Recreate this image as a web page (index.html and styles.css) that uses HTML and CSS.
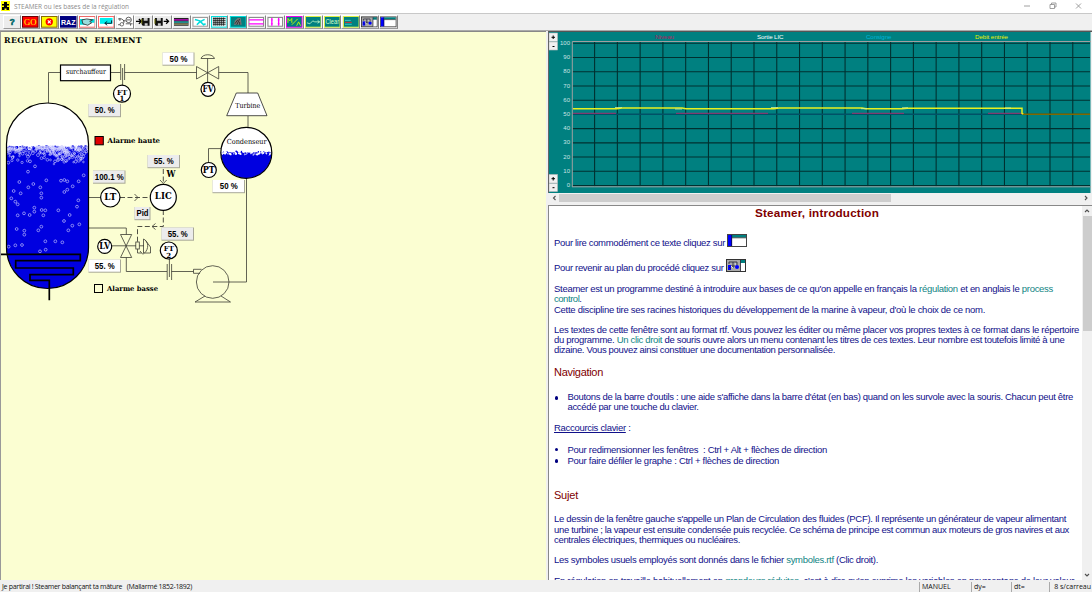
FILE: index.html
```html
<!DOCTYPE html>
<html lang="fr">
<head>
<meta charset="utf-8">
<title>STEAMER ou les bases de la régulation</title>
<link rel="stylesheet" href="styles.css">
</head>
<body>
<div class="window">
  <header class="titlebar">
    <svg class="app-icon" viewBox="0 0 9 10"><rect width="9" height="10" fill="#ff0"/><path d="M3 1H6V3H8V4.500H6V6H8V9H5.500V7.500H3.500V9H1V6H3V4.500H1V3H3Z" fill="#000"/></svg>
    <svg class="caption" viewBox="0 0 200 13"><text x="0" y="9.300" textLength="115" lengthAdjust="spacingAndGlyphs">STEAMER ou les bases de la régulation</text></svg>
    <svg class="controls" viewBox="0 0 70 13"><path d="M0 6H6M26 4.500H30.500V8.500H26ZM27.500 4.500V3H32V7H30.500M52 3.500L57 8.500M57 3.500L52 8.500" fill="none" stroke="#888" stroke-width=".8"/></svg>
  </header>

  <nav class="toolbar">
    <button class="tool"><svg viewBox="0 0 17 12"><text x="8.500" y="9.500" class="t-help">?</text></svg></button>
    <button class="tool"><svg viewBox="0 0 17 12"><rect x=".5" y=".5" width="16" height="11" fill="red" stroke="#600"/><text x="8.500" y="9" class="t-go">GO</text></svg></button>
    <button class="tool"><svg viewBox="0 0 17 12"><rect x=".5" y=".5" width="16" height="11" fill="#ff0" stroke="#860"/><circle cx="8.500" cy="6" r="3.800" fill="red"/><path d="M7 4.500L10 7.500M10 4.500L7 7.500" stroke="#fff" stroke-width="1.200"/></svg></button>
    <button class="tool"><svg viewBox="0 0 17 12"><rect width="17" height="12" fill="#000080"/><text x="8.500" y="9" class="t-raz" textLength="15" lengthAdjust="spacingAndGlyphs">RAZ</text></svg></button>
    <button class="tool"><svg viewBox="0 0 17 12"><rect x=".5" y=".5" width="16" height="11" fill="#fff" stroke="#e66"/><path d="M1 3H6V9H1ZM11 3H16V7H12Z" fill="#0dd"/><path d="M3 4L8 3L14 4L11 5.500L13 7L9 9.500L4 8Z" fill="#9dd" stroke="#222" stroke-width=".8"/></svg></button>
    <button class="tool"><svg viewBox="0 0 17 12"><rect x=".5" y=".5" width="16" height="11" fill="#fff" stroke="#f66"/><rect x="2" y="2" width="13" height="6" fill="#0ee"/><path d="M14 4.500V7.500H7M9.500 5.500L7 7.500L9.500 9.500" fill="none" stroke="#023"/></svg></button>
    <button class="tool"><svg viewBox="0 0 17 12"><rect width="17" height="12" fill="#fff"/><path d="M1 3H5L7 5H9M1 9H5L7 7V4M3 2V5M9 8H16M14 8V10" fill="none" stroke="#333" stroke-width=".8"/><circle cx="12" cy="4" r="2.800" fill="#fff" stroke="#333" stroke-width=".8"/><circle cx="5" cy="8.500" r="1.800" fill="#fff" stroke="#333" stroke-width=".7"/><path d="M10 4H14" stroke="#333" stroke-width=".8"/></svg></button>
    <button class="tool"><svg viewBox="0 0 17 12"><path d="M1 5.500H6M4 3L6.500 5.500L4 8" fill="none" stroke="#000" stroke-width="1.300"/><path d="M7 2H15V10H8L7 9Z" fill="#111"/><path d="M9 2H13V5H9ZM10 7.500H13V10H10Z" fill="#ccc"/><path d="M7 3V8" stroke="#770"/></svg></button>
    <button class="tool"><svg viewBox="0 0 17 12"><path d="M1 2H9V10H2L1 9Z" fill="#111"/><path d="M3 2H7V5H3ZM4 7.500H7V10H4Z" fill="#ccc"/><path d="M1 3V8" stroke="#770"/><path d="M10 5.500H15M12.500 3L15 5.500L12.500 8" fill="none" stroke="#000" stroke-width="1.300"/></svg></button>
    <button class="tool"><svg viewBox="0 0 17 12"><path d="M1 2H16V10H1Z" fill="#222"/><path d="M1 4H16" stroke="#d0d" stroke-width="1.200"/><path d="M1 6.200H16" stroke="#2cc" stroke-width="1.200"/><path d="M1 8.300H16" stroke="#cc8"/></svg></button>
    <button class="tool"><svg viewBox="0 0 17 12"><rect x="1" y="1.500" width="15" height="9" fill="#fff" stroke="#999"/><path d="M3 3.500L8 5L12 9L14 8M13 3.500L8 6L5 9" fill="none" stroke="#0dd" stroke-width="1.600"/></svg></button>
    <button class="tool"><svg viewBox="0 0 17 12"><rect x=".5" y=".5" width="16" height="11" fill="#dee" stroke="#0dd"/><path d="M2 2.500H15M2 4.500H15M2 6.500H15M2 8.500H15M3 1.500V10M5 1.500V10M7 1.500V10M9 1.500V10M11 1.500V10M13 1.500V10" stroke="#111" stroke-width=".8"/></svg></button>
    <button class="tool"><svg viewBox="0 0 17 12"><rect x=".5" y=".5" width="16" height="11" fill="#008080" stroke="#0dd"/><path d="M4 9L5 5L8 2H11L12 9Z" fill="#777"/><path d="M5 8L8 4M7 9L10 3M10 9V6" stroke="#222" stroke-width=".8"/></svg></button>
    <button class="tool"><svg viewBox="0 0 17 12"><rect x="1" y="1.500" width="15" height="9" fill="#fff" stroke="#888"/><path d="M1 4H16M1 8H16" stroke="#f0f" stroke-width="1.300"/></svg></button>
    <button class="tool"><svg viewBox="0 0 17 12"><rect x="1" y="1.500" width="15" height="9" fill="#fff" stroke="#888"/><path d="M5 2V10M12 2V10" stroke="#f0f" stroke-width="1.400"/><path d="M4 4H6M11 4H13M4 8H6M11 8H13" stroke="#f0f" stroke-width=".8"/></svg></button>
    <button class="tool"><svg viewBox="0 0 17 12"><rect x=".5" y=".5" width="16" height="11" fill="#008080" stroke="#e0e"/><path d="M2 7V2.500L4 5L6 2.500V7M11 10L13 6L15 10M6 9L12 3" fill="none" stroke="#cf0" stroke-width=".9"/></svg></button>
    <button class="tool"><svg viewBox="0 0 17 12"><rect x=".5" y=".5" width="16" height="11" fill="#008080" stroke="#de4"/><path d="M2 7L5 8L8 5L10 6H15M13 4.500L15 6L13 7.500" fill="none" stroke="#cfc" stroke-width=".8"/></svg></button>
    <button class="tool"><svg viewBox="0 0 17 12"><rect x=".5" y=".5" width="16" height="11" fill="#008080" stroke="#de4"/><text x="8.500" y="8.300" class="t-clear" textLength="14" lengthAdjust="spacingAndGlyphs">Clear</text></svg></button>
    <button class="tool"><svg viewBox="0 0 17 12"><rect x=".5" y=".5" width="16" height="11" fill="#008080" stroke="#de4"/><path d="M2 4.500H8M2 8.500H9" stroke="#3cc"/><path d="M2 6.500H9" stroke="#d33"/></svg></button>
    <button class="tool"><svg viewBox="0 0 20 13"><use href="#plan-icon"/></svg></button>
    <button class="tool"><svg viewBox="0 0 20 13"><use href="#text-icon"/></svg></button>
  </nav>

  <main class="panes">
    <section class="diagram">
      <svg viewBox="0 31 546 549" id="plant">
        <defs>
          <clipPath id="tank-clip"><path d="M6.500 144A41 41 0 0 1 88.500 144V247.500A41 41 0 0 1 6.500 247.500Z"/></clipPath>
          <clipPath id="cond-clip"><circle cx="246.300" cy="152.800" r="25.300"/></clipPath>
        </defs>
        <g class="heading"><text x="4" y="42.700" textLength="64">REGULATION</text><text x="75" y="42.700" textLength="12.500">UN</text><text x="94.500" y="42.700" textLength="47">ELEMENT</text></g>

        <g class="pipe">
          <path d="M48.500 103V72.500H60M110 72.500H120.500M124.500 72.500H196.500M218.700 72.500H248V93M248 116V127"/>
          <path d="M120.700 64V80M124.600 64V80M122.600 68V86"/>
          <path d="M208.500 162V148.600H221M246.500 178V282H213"/>
          <path d="M89 197.500H100M89 228H126.300V234.500M126.300 257.500V271.500H167M171.500 271.500H193.500M112 245.800H136"/>
          <path d="M167.200 264V280M171.600 264V280M169.400 258V277"/>
          <path d="M196.500 66.500V79L218.700 66.500V79ZM207.600 58.500V82M201 58.500H214.500C213 53.500 202.500 53.500 201 58.500"/>
          <path d="M120.500 234.500H131.700L120.500 257.500H131.700Z"/>
          <rect x="135.800" y="242" width="3.500" height="7"/>
          <path d="M139.300 245.800H144M143.500 239V253.500M143.500 239C148.500 241 149.500 249 144 253.500M145.500 240.500L150.500 247V253H143.500M137.500 249V253H141.500M140 251L143 254.500"/>
          <circle cx="212.700" cy="282" r="16.300"/><path d="M200 273.300H193.500V269.300H201.500M205 296L195 302H230.500L221 296"/>
        </g>
        <g class="signal">
          <path d="M120 197.500H150M163.300 169V184M163.300 210V226.500H137.500V242"/>
        </g>
        <path class="pipe" d="M134.500 194L138 197.500L134.500 201M160 180L163.300 183.500L166.700 180M155.500 223.500L152 226.500L155.500 229.500"/>

        <path d="M6.500 144A41 41 0 0 1 88.500 144V247.500A41 41 0 0 1 6.500 247.500Z" fill="#fff"/>
        <g clip-path="url(#tank-clip)"><rect x="5" y="150" width="85" height="140" fill="#0000e0"/><g id="tank-froth"></g><g id="tank-bubbles" class="bubble"></g></g>
        <path class="shell" d="M6.500 144A41 41 0 0 1 88.500 144V247.500A41 41 0 0 1 6.500 247.500Z"/>
        <path class="heater" d="M0 254.300H80.300V260.700H15.700V268H73.300V274.700H30V280.300H49.300V300.300"/>

        <circle cx="246.300" cy="152.800" r="25.500" fill="#fff"/>
        <g clip-path="url(#cond-clip)"><rect x="220" y="152.500" width="54" height="28" fill="#0000e0"/><g id="cond-froth"></g></g>
        <circle class="shell" cx="246.300" cy="152.800" r="25.500"/>
        <path d="M236.300 93H257.700L267 115.700H226.700Z" class="thin-box"/>
        <rect x="60.500" y="65" width="50" height="15.700" class="shell white"/>
        <text x="66" y="74.200" class="label" textLength="40" lengthAdjust="spacingAndGlyphs">surchauffeur</text>
        <text x="235.300" y="107.800" class="label" textLength="25" lengthAdjust="spacingAndGlyphs">Turbine</text>
        <text x="226.700" y="144.300" class="label" textLength="40" lengthAdjust="spacingAndGlyphs">Condenseur</text>

        <g class="shell white">
          <circle cx="122" cy="93.700" r="8.500"/><circle cx="208" cy="89.300" r="7"/><circle cx="208.800" cy="170" r="7.500"/>
          <circle cx="110.300" cy="197.300" r="9.700"/><circle cx="163.300" cy="197.300" r="13"/><circle cx="104.700" cy="246.400" r="7"/><circle cx="168.800" cy="250.500" r="8.500"/>
        </g>
        <g class="tag">
          <text x="122" y="94.500" class="s">FT</text><text x="122" y="100.700" class="s">1</text>
          <text x="208" y="92.300" textLength="11" lengthAdjust="spacingAndGlyphs">FV</text>
          <text x="208.800" y="173.200" textLength="12" lengthAdjust="spacingAndGlyphs">PT</text>
          <text x="110.300" y="200.200" textLength="12" lengthAdjust="spacingAndGlyphs">LT</text>
          <text x="163.300" y="199.200" textLength="17">LIC</text>
          <text x="104.700" y="249.400" textLength="11" lengthAdjust="spacingAndGlyphs">LV</text>
          <text x="168.800" y="251.300" class="s">FT</text><text x="168.800" y="257.500" class="s">2</text>
          <text x="171" y="177.300" textLength="9" lengthAdjust="spacingAndGlyphs">W</text>
        </g>
        <rect x="95" y="136.500" width="8.300" height="8.300" fill="#e00000" stroke="#000"/>
        <rect x="94.500" y="284.500" width="8" height="8" fill="#fbfed2" stroke="#000"/>
        <text x="107.500" y="143.300" class="alarm" textLength="52.500" lengthAdjust="spacingAndGlyphs">Alarme haute</text>
        <text x="107" y="291" class="alarm" textLength="51" lengthAdjust="spacingAndGlyphs">Alarme basse</text>
        <g id="readouts"></g>
      </svg>
    </section>

    <div class="side">
      <section class="chart">
        <svg viewBox="548 31 544 162" id="graph">
          <rect x="548" y="31" width="542.500" height="162" fill="#008080"/>
          <g id="grid"></g>
          <path d="M572.300 187V41.500H1091M572 186.800H1091" fill="none" stroke="#a0a0a0"/>
          <path d="M573 114.200H1022" stroke="#006080"/>
          <path d="M573 113.300H616M676 113.300H768M852 113.300H904M988 113.300H1022" stroke="#a03070"/>
          <path d="M573 108.700H617L622 108H682L686 108.700H774L779 108H862L866 108.700H902L907 108.200H1022V113.500L1023 114H1024" fill="none" stroke="#e8f020" stroke-width="1.500"/>
          <path d="M615 107.500H622M675 109H682M771 107.500H778M861 108.700H867M902 107.800H908M1005 108H1011" stroke="#d0f0a0" stroke-width=".8"/>
          <path d="M1023 114.200H1090" stroke="#806800" stroke-width="1.400"/>
          <g class="series">
            <text x="655" y="39" fill="#b02060" textLength="19">Niveau</text><text x="757" y="39" fill="#fff" textLength="26.500">Sortie LIC</text><text x="866" y="39" fill="#00b4d8" textLength="25.500">Consigne</text><text x="975" y="39" fill="#e8f000" textLength="33">Debit entrée</text>
          </g>
          <g class="zoom-box"><rect x="549" y="33" width="8.500" height="8.500"/><rect x="549" y="42" width="8.500" height="8"/><rect x="549" y="174.500" width="8.500" height="8.500"/><rect x="549" y="183.500" width="8.500" height="8"/></g>
          <path d="M551.500 37.300H555M553.200 35.500V39M552.500 46.500H554.500M551.500 178.700H555M553.200 177V180.500M552.500 187.700H554.500" stroke="#000"/>
        </svg>
      </section>
      <div class="hscroll"><svg viewBox="0 0 10 10"><path d="M6.500 3L4.500 5L6.500 7"/></svg><span class="hthumb"></span><svg viewBox="0 0 10 10"><path d="M4 3L6 5L4 7"/></svg></div>

      <section class="reader">
        <article class="doc" id="doc">
          <h1 data-w="124">Steamer, introduction</h1>
          <p class="with-icon first"><span data-w="171">Pour lire commodément ce texte cliquez sur</span><svg viewBox="0 0 20 13"><g id="text-icon"><rect x=".5" y=".5" width="19" height="12" fill="#fff" stroke="#444"/><path d="M1 1H5V12H1Z" fill="#00f"/><path d="M5 1H19V3.500H5Z" fill="#008080"/><path d="M5 3.800H19M4.700 1V12" stroke="#111" stroke-width=".7"/></g></svg></p>
          <p class="with-icon"><span data-w="169.500">Pour revenir au plan du procédé cliquez sur</span><svg viewBox="0 0 20 13"><g id="plan-icon"><rect x=".5" y=".5" width="19" height="12" fill="#aaa" stroke="#333"/><path d="M14.500 1H19V4H14.500Z" fill="#008080"/><path d="M14.500 4H19V12H14.500Z" fill="#fff"/><path d="M2 6H5V11H2Z" fill="#00f"/><circle cx="11" cy="8" r="2" fill="#00f"/><path d="M3 5V3H7V9M7 3H11V6M5 7H9M3 8L5 10M14.500 1V12" fill="none" stroke="#223" stroke-width=".8"/><path d="M5 7L7 9M9 5H10" stroke="#fff" stroke-width=".8"/></g></svg></p>
          <p class="intro"><span data-w="499">Steamer est un programme destiné à introduire aux bases de ce qu'on appelle en français la <a>régulation</a> et en anglais le <a>process</a></span><span data-w="27.500"><a>control</a>.</span><span data-w="431">Cette discipline tire ses racines historiques du développement de la marine à vapeur, d'où le choix de ce nom.</span></p>
          <p class="gap"><span data-w="525">Les textes de cette fenêtre sont au format rtf. Vous pouvez les éditer ou même placer vos propres textes à ce format dans le répertoire</span><span data-w="510.500">du programme. <a>Un clic droit</a> de souris ouvre alors un menu contenant les titres de ces textes. Leur nombre est toutefois limité à une</span><span data-w="281">dizaine. Vous pouvez ainsi constituer une documentation personnalisée.</span></p>
          <h2 class="nav-head" data-w="49">Navigation</h2>
          <ul class="help"><li><span data-w="505.500">Boutons de la barre d'outils : une aide s'affiche dans la barre d'état (en bas) quand on les survole avec la souris. Chacun peut être</span><span data-w="131">accédé par une touche du clavier.</span></li></ul>
          <p class="gap"><span data-w="76.500"><u>Raccourcis clavier</u> :</span></p>
          <ul class="keys"><li><span data-w="259.500">Pour redimensionner les fenêtres &nbsp;: Ctrl + Alt + flèches de direction</span></li><li><span data-w="211.500">Pour faire défiler le graphe : Ctrl + flèches de direction</span></li></ul>
          <h2 class="subject" data-w="24">Sujet</h2>
          <p class="after-head"><span data-w="512">Le dessin de la fenêtre gauche s'appelle un Plan de Circulation des fluides (PCF). Il représente un générateur de vapeur alimentant</span><span data-w="515">une turbine ; la vapeur est ensuite condensée puis recyclée. Ce schéma de principe est commun aux moteurs de gros navires et aux</span><span data-w="186">centrales électriques, thermiques ou nucléaires.</span></p>
          <p class="gap"><span data-w="324">Les symboles usuels employés sont donnés dans le fichier <a>symboles.rtf</a> (Clic droit).</span></p>
          <p class="gap last"><span data-w="520">En régulation on travaille habituellement en <a>grandeurs réduites</a>, c'est à dire qu'on exprime les variables en pourcentage de leur valeur</span></p>
        </article>
        <div class="vscroll"><svg viewBox="0 0 10 10"><path d="M3 6L5 4L7 6"/></svg><span class="vthumb"></span><svg viewBox="0 0 10 10"><path d="M3 4L5 6L7 4"/></svg></div>
      </section>
    </div>
  </main>

  <footer class="status"><span class="message" data-w="190">Je partirai ! Steamer balançant ta mâture &nbsp; (Mallarmé 1852-1892)</span><span class="cell mode">MANUEL</span><span class="cell dy">dy=</span><span class="cell dt">dt=</span><span class="cell rate">8 s/carreau</span></footer>
</div>
<script src="app.js"></script>
</body>
</html>
```

FILE: styles.css
```css
* { box-sizing: border-box; }
body { margin: 0; background: #f0f0f0; font-family: "Liberation Sans", Arial, sans-serif; overflow: hidden; }
svg { display: block; }
.window { display: flex; flex-direction: column; width: 1092px; height: 592px; }
.titlebar { display: flex; height: 14px; background: #fff; border-bottom: 1px solid #c8c8c8; }
.app-icon { width: 9px; height: 10px; margin: 1px 0 0 1px; }
.caption { width: 200px; height: 13px; margin-left: 4px; }
.caption text { font: 7.5px "Open Sans", sans-serif; fill: #8c8c8c; }
.controls { width: 70px; height: 13px; margin-left: auto; margin-right: -2px; }
.toolbar { display: flex; height: 17px; padding: 1px 0 1px 2.500px; border-bottom: 1px solid #aaa; }
.tool { display: flex; justify-content: center; align-items: center; flex: none; width: 18.830px; height: 14px; padding: 0; border: 1px solid; border-color: #fff #858585 #9a9a9a #fff; background: #ececec; }
.tool svg { flex: none; width: 16.500px; height: 11.700px; }
.t-help { font: bold 9px "Liberation Sans", sans-serif; fill: #006868; stroke: #006868; stroke-width: .5px; text-anchor: middle; }
.t-go { font: 9px "Liberation Serif", serif; fill: #ff0; text-anchor: middle; }
.t-raz { font: bold 8px "Liberation Sans", sans-serif; fill: #fff; text-anchor: middle; }
.t-clear { font: 6.500px "Liberation Sans", sans-serif; fill: #d8ffc0; text-anchor: middle; }
.panes { display: flex; height: 549px; }
.diagram { width: 546px; background: #fbfed2; border-left: 1px solid #999; border-top: 1px solid #888; overflow: hidden; }
.diagram svg { width: 546px; height: 549px; margin: -1px 0 0 -1px; }
.heading { font: bold 8px "DejaVu Serif", serif; }
.heading text { font-size: 7.800px; }
.label { font: 7px "DejaVu Serif", serif; }
.alarm { font: bold 7px "DejaVu Serif", serif; }
.pipe { fill: none; stroke: #3c3c34; stroke-width: .8px; }
.signal { fill: none; stroke: #3c3c34; stroke-width: .9px; stroke-dasharray: 5 2.500; }
.shell { fill: none; stroke: #000; stroke-width: 1.200px; }
.white { fill: #fff; }
.thin-box { fill: #fff; stroke: #222; stroke-width: .8px; }
.heater { fill: none; stroke: #000; stroke-width: 1.700px; }
.bubble { fill: none; stroke: #c8c8ff; stroke-width: .65px; }
.tag text { font: bold 8.500px "DejaVu Serif", serif; text-anchor: middle; }
.tag .s { font-size: 7px; }
.value { font: bold 8.500px "Liberation Sans", sans-serif; text-anchor: middle; }
.side { display: flex; flex-direction: column; width: 546px; padding-left: 2px; background: #f0f0f0; }
.chart { height: 162px; border-top: 1px solid #555; border-left: 1px solid #666; overflow: hidden; }
.chart svg { width: 544px; height: 162px; margin: -1px 0 0 -1px; }
.series text { font: 6.200px "Liberation Sans", sans-serif; }
.axis { font: 6px "Liberation Sans", sans-serif; fill: #c8e4e4; text-anchor: end; }
.zoom-box rect { fill: #f0f0f0; stroke: #bbb; stroke-width: .6px; }
.hscroll { display: flex; height: 10px; padding: 0 1px; align-items: center; }
.hscroll svg { width: 10px; height: 10px; }
.hscroll svg:last-child { margin-left: auto; }
.hscroll path, .vscroll path { fill: none; stroke: #505050; stroke-width: 1.100px; }
.hthumb { width: 332px; height: 8px; background: #cdcdcd; }
.reader { display: flex; height: 375px; margin-top: 2px; border-top: 1px solid #888; border-left: 1px solid #888; background: #fff; overflow: hidden; }
.doc { flex: 1; height: 374px; padding: 0 0 0 5px; overflow: hidden; color: #10108a; font-size: 9.500px; line-height: 10.250px; white-space: nowrap; }
.doc > * { margin: 0; }
.doc p > span, .doc li > span { display: block; width: max-content; }
.doc a { color: #108484; }
.doc h1 { width: max-content; margin-left: 201px; font-size: 11.700px; line-height: 14px; color: #800000; }
.doc h2 { width: max-content; font-size: 11px; font-weight: normal; line-height: 12px; color: #800000; }
.doc .with-icon { display: flex; align-items: flex-end; height: 14.500px; margin-bottom: 10.500px; }
.doc .first { margin-top: 14px; }
.with-icon svg { width: 20px; height: 13px; margin: 0 0 1.500px 2px; }
.doc .intro { margin-top: 0; }
.doc .gap { margin-top: 10.100px; }
.doc .nav-head { margin-top: 10.500px; }
.doc ul { padding: 0 0 0 13.500px; list-style: none; }
.doc .help { margin-top: 14px; }
.doc .keys { margin-top: 11px; line-height: 11.200px; }
.doc li { position: relative; }
.doc li::before { content: ""; position: absolute; left: -13px; top: 4px; width: 3.500px; height: 3.500px; border-radius: 50%; background: #000080; }
.doc .subject { margin-top: 23px; }
.doc .after-head { margin-top: 13px; }
.vscroll { display: flex; flex-direction: column; align-items: center; width: 10px; background: #f0f0f0; }
.vscroll svg { width: 10px; height: 10px; }
.vscroll svg:last-child { margin-top: auto; }
.vthumb { width: 9px; height: 115px; background: #cdcdcd; }
.status { display: flex; height: 12px; align-items: flex-start; padding-left: 2px; font: 7px "Open Sans", sans-serif; white-space: nowrap; color: #111; }
.message { margin-top: 2px; line-height: 10px; }
.cell { height: 10px; margin-top: 2px; padding-left: 2px; border-left: 1px solid #aaa; line-height: 10px; }
.mode { width: 52px; margin-left: auto; }
.dy { width: 40px; }
.dt { width: 38px; }
.rate { width: 43px; padding-right: 1px; text-align: right; }
```

FILE: app.js
```js
const NS = 'http://www.w3.org/2000/svg';
function add(parent, tag, attrs, text) {
  const el = document.createElementNS(NS, tag);
  for (const key in attrs) el.setAttribute(key, attrs[key]);
  if (text !== undefined) el.textContent = text;
  document.getElementById(parent).appendChild(el);
}

// Measured values: x, y, width, text
[[162.5, 52.5, 32, '50 %'], [88.5, 104, 32.500, '50. %'], [147.5, 155, 32.500, '55. %'],
 [93, 170.500, 32.500, '100.1 %'], [212.500, 180, 32.500, '50 %'], [134.500, 207, 16, 'Pid'],
 [161.500, 227.500, 32.500, '55. %'], [88.500, 259.500, 32.500, '55. %']].forEach(([x, y, w, t], i) => {
  add('readouts', 'rect', { x, y, width: w, height: 13.2, fill: '#a8a898' });
  add('readouts', 'rect', { x, y, width: w - 1, height: 12.2, fill: i === 0 || i === 4 || i === 7 ? '#fff' : '#ececec' });
  const len = t === 'Pid' ? 12 : t.length === 7 ? 29 : t.length === 5 ? 20 : 18;
  add('readouts', 'text', { x: x + w / 2, y: y + 9.4, class: 'value', textLength: len, lengthAdjust: 'spacingAndGlyphs' }, t);
});

// Repeatable noise for the boiling surface
let seed = 7;
const rnd = () => (seed = (seed * 16807) % 2147483647) / 2147483647;
for (let i = 0; i < 150; i++)
  add('tank-froth', 'circle', { cx: 6 + rnd() * 83, cy: 146.5 + rnd() * 4.5, r: .6 + rnd() * 1.1, fill: '#0000e0' });
for (let i = 0; i < 250; i++) {
  const x = i < 200 ? 7 + rnd() * 81 : 49 + rnd() * 18;
  add('tank-froth', 'circle', { cx: x, cy: 147 + rnd() * rnd() * 18, r: .7 + rnd() * .8, fill: 'none', stroke: '#d4d4ff', 'stroke-width': .55 });
}
for (let i = 0; i < 100; i++)
  add('cond-froth', 'circle', { cx: 222 + rnd() * 49, cy: 151.5 + rnd() * 3, r: .5 + rnd() * .6, fill: rnd() > .4 ? '#fff' : '#0000e0' });

[[84,5],[58,36],[100,42],[85,52],[121,52],[139,31],[183,32],[193,30],[202,34],[236,34],[251,16],[41,63],[62,70],[124,70],[124,83],[193,66],[202,59],[218,49],[34,85],[46,95],[53,103],[103,113],[235,91],[231,110],[125,120],[136,121],[175,121],[103,125],[53,136],[72,130],[89,135],[130,136],[209,135],[192,153],[50,177],[73,182],[73,194],[124,170],[115,181],[217,167],[238,163],[205,181],[136,214],[166,214],[187,217],[26,230],[46,226],[66,225],[137,239],[120,244],[90,-26],[105,-11],[165,-26],[227,-25],[25,-22],[155,-55],[68,-49]].forEach(([x, y]) =>
  add('tank-bubbles', 'circle', { cx: x / 3, cy: 170 + y / 3, r: 1.4 }));

// Graph grid and axis
for (let i = 0; i < 22; i++) {
  const x = 594.6 + i * 22.77;
  add('grid', 'path', { d: `M${x} 42V186.500`, stroke: '#003030', 'stroke-width': 1.1 });
}
for (let i = 0; i <= 10; i++) {
  const y = 43.3 + i * 14.22;
  add('grid', 'path', { d: `M572.500 ${y}H1090`, stroke: '#003030', 'stroke-width': 1.1 });
  add('grid', 'text', { x: 570, y: y + 1.6, class: 'axis' }, 100 - i * 10);
}

// Adjust tracking so that each line keeps its set measure
document.querySelectorAll('[data-w]').forEach(el => {
  const width = el.getBoundingClientRect().width;
  el.style.letterSpacing = (el.dataset.w - width) / el.textContent.length + 'px';
});
```
